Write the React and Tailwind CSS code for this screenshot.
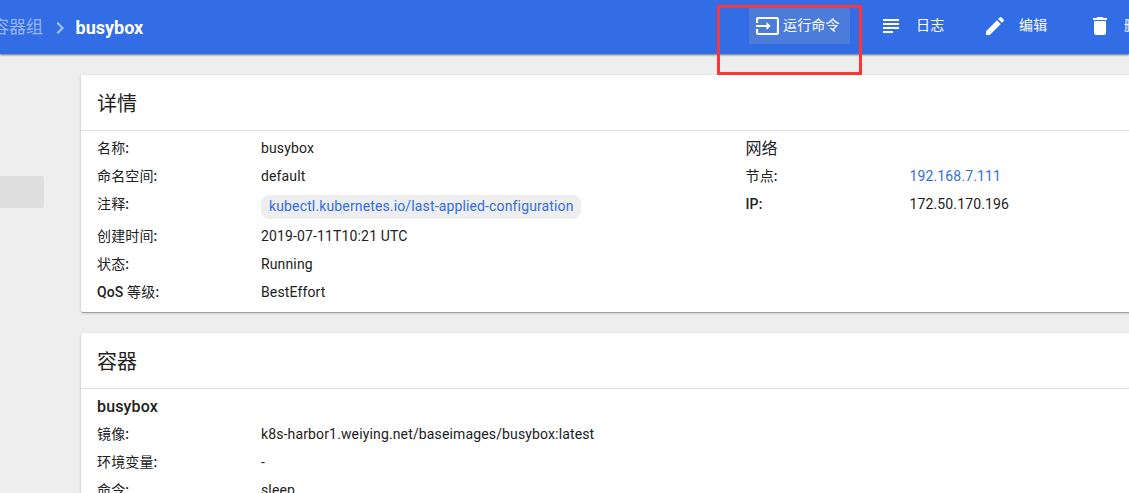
import { MdInput, MdSubject, MdEdit, MdDelete, MdChevronRight } from "react-icons/md";

function Action({ icon: Icon, children, className }) {
  return (
    <button className={`-mt-[2px] flex h-9 shrink-0 items-center whitespace-nowrap rounded-[2px] text-[14px] font-normal text-white ${className}`}>
      <Icon className="h-6 w-6 shrink-0" preserveAspectRatio="none" />
      <span className="pb-[2px]">{children}</span>
    </button>
  );
}

function Row({ label, latin = "", children, className = "h-7" }) {
  return (
    <div className={`flex ${className}`}>
      <div className="w-[164px] shrink-0 leading-7">
        <span className="font-medium">{latin}</span>
        {label}
        <span className="font-medium">:</span>
      </div>
      <div className="whitespace-nowrap leading-7">{children}</div>
    </div>
  );
}

function Card({ title, className, children }) {
  return (
    <section className={`w-[1329px] shrink-0 rounded-[2px] bg-white shadow-[0_1px_3px_0_rgba(0,0,0,0.2),0_1px_1px_0_rgba(0,0,0,0.14),0_2px_1px_-1px_rgba(0,0,0,0.12)] ${className}`}>
      <h2 className="flex h-14 items-center border-b border-[#e0e0e0] px-4 pt-[2px] text-[20px] font-normal tracking-normal">{title}</h2>
      {children}
    </section>
  );
}

export default function App() {
  return (
    <div className="relative flex h-[493px] w-[1129px] flex-col overflow-hidden bg-[#eeeeee] font-['Roboto','Noto_Sans_CJK_SC',sans-serif] text-[14px] tracking-[0.01em] text-[#212121]">
      <header className="z-10 flex h-[54px] shrink-0 items-center bg-[#326de6] shadow-[0_1px_2px_0_rgba(0,0,0,0.55)]">
        <nav className="flex w-[749px] shrink-0 items-center text-[17px] tracking-normal">
          <span className="-ml-2 whitespace-nowrap pt-[2px] text-white/50">容器组</span>
          <MdChevronRight className="ml-[5px] mt-[2px] h-6 w-6 text-white/60" />
          <span className="ml-[3.5px] text-[18px] font-bold text-white">busybox</span>
        </nav>
        <Action icon={MdInput} className="w-[101px] gap-[3px] bg-[#4b7cdb] pl-[6px] [&>svg]:w-[25px]">运行命令</Action>
        <Action icon={MdSubject} className="ml-[29px] w-[75px] gap-[13px]">日志</Action>
        <Action icon={MdEdit} className="ml-[29px] w-[75px] gap-[12px]">编辑</Action>
        <Action icon={MdDelete} className="ml-[30px] gap-[12px]">删除</Action>
      </header>

      <div className="flex min-h-0 flex-1">
        <aside className="w-[81px] shrink-0 pt-[122px]">
          <div className="h-8 w-11 rounded-r-[2px] bg-[#dedede]" />
        </aside>
        <main className="flex flex-1 flex-col pt-[21px]">
          <Card title="详情" className="h-[237px]">
            <div className="flex px-4 pt-[3px]">
              <div className="w-[648.5px] shrink-0">
                <Row label="名称">busybox</Row>
                <Row label="命名空间">default</Row>
                <Row label="注释" className="h-8">
                  <span className="mt-[5px] flex h-6 w-[320px] items-center rounded-[8px] bg-[#eeeeee] px-2 pb-[2px] text-[#326de6]">kubectl.kubernetes.io/last-applied-configuration</span>
                </Row>
                <Row label="创建时间">2019-07-11T10:21 UTC</Row>
                <Row label="状态">Running</Row>
                <Row latin="QoS " label="等级">BestEffort</Row>
              </div>
              <div>
                <h3 className="h-7 pt-px text-[16px] leading-7 tracking-normal">网络</h3>
                <Row label="节点"><span className="text-[#326de6]">192.168.7.111</span></Row>
                <Row latin="IP" label="">172.50.170.196</Row>
              </div>
            </div>
          </Card>
          <Card title="容器" className="mt-[21px] h-[300px]">
            <div className="px-4 pt-[3px]">
              <h3 className="h-7 pt-px text-[16px] font-medium leading-7">busybox</h3>
              <Row label="镜像">k8s-harbor1.weiying.net/baseimages/busybox:latest</Row>
              <Row label="环境变量">-</Row>
              <Row label="命令">sleep</Row>
            </div>
          </Card>
        </main>
      </div>

      <div className="pointer-events-none absolute left-[717px] top-[5px] z-20 h-[70px] w-[145px] border-[3px] border-[#ff3535]" />
    </div>
  );
}
